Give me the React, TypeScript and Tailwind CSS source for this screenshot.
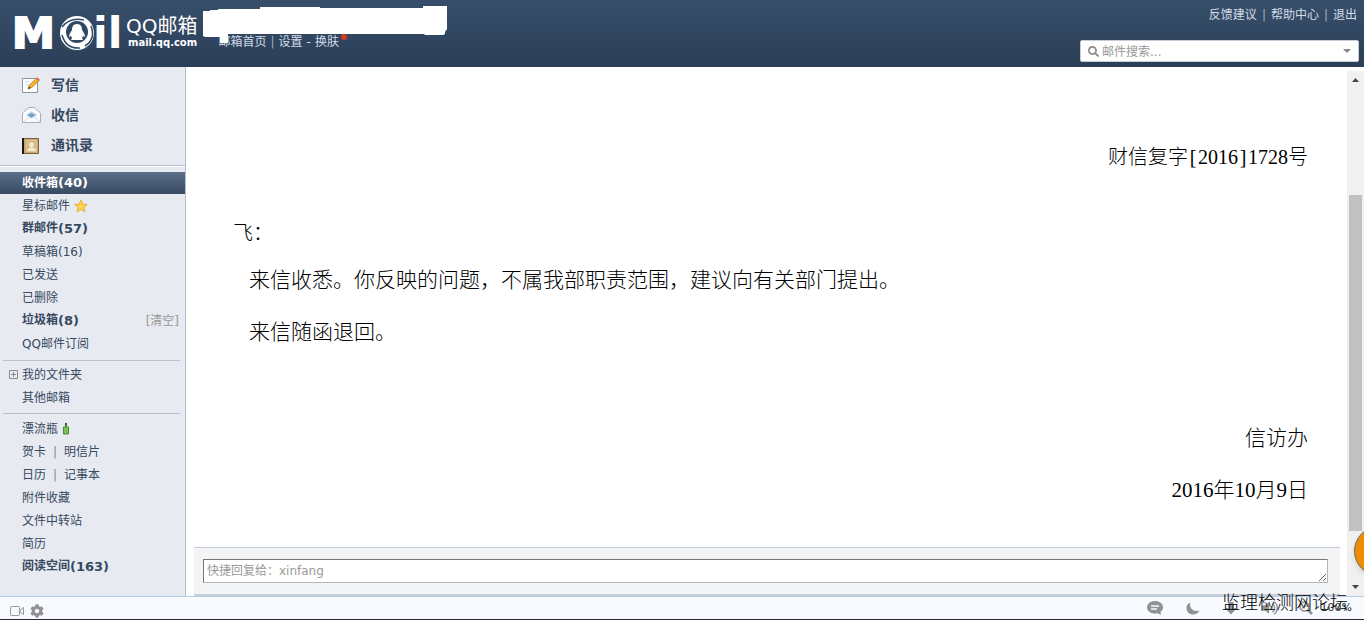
import type { ReactNode } from "react";
import { FaSearch, FaVolumeUp, FaCog } from "react-icons/fa";

const Logo = () => {
  return (
    <a href="#" aria-label="QQ Mail" className="flex text-white">
      <svg width="124" height="67" viewBox="0 0 124 67" className="shrink-0 overflow-visible font-['DejaVu_Sans',sans-serif] text-[43px] font-bold">
        <text x="12" y="48" fill="#fff" stroke="#fff" strokeWidth="2">M</text>
        <text x="93" y="48" fill="#fff">il</text>
        <circle cx="77" cy="33" r="19" fill="#324962" />
        <circle cx="77" cy="33" r="17" fill="#fff" />
        <circle cx="77" cy="32" r="11" fill="#314861" />
        <path d="M62 27q8-10 22-7M91 26q5 13-6 20M80 48q-14 1-18-13" fill="none" stroke="#314861" strokeWidth="1.500" />
        <path d="M77 24c-4 0-5 3-5 6-2 3-3 5-3 7l2-1 1 2-1 2h12l-1-2 1-2 2 1c0-2-1-4-3-7 0-3-1-6-5-6z" fill="#fff" />
      </svg>
      <span className="flex flex-col pt-[15px] pl-[2px]">
        <span className="text-[20px] leading-[22px]">QQ邮箱</span>
        <span className="pl-[2px] text-[10px] font-bold leading-[12px]">mail.qq.com</span>
      </span>
    </a>
  );
};

const Header = () => {
  return (
    <header className="relative flex h-[67px] shrink-0 justify-between bg-linear-to-b from-[#374f6b] to-[#2c3e57] text-xs text-[#d3dce8]">
      <div className="flex">
        <Logo />
        <nav className="flex gap-1 pt-[34px] pl-[21px] leading-4 whitespace-nowrap">
          <a href="#">邮箱首页</a>
          <span className="text-[#9fadbf]">|</span>
          <a href="#">设置</a>
          <span>-</span>
          <a href="#" className="relative">
            换肤
            <span className="absolute top-0 -right-2 size-[6px] rounded-full bg-[#d9391e]" />
          </a>
        </nav>
      </div>
      {/* account name is painted over */}
      <svg className="absolute top-0 left-[200px]" width="250" height="46" viewBox="0 0 250 46">
        <path d="M3 11h7v-1h8V9h42V7h60v1h103V6h24v23l-2 3v2l-2 1h-18l-1-1H28v9h-8v-6H5l-2-1z" fill="#fff" />
      </svg>
      <div className="flex flex-col items-end pr-[5px]">
        <nav className="flex gap-[5px] pt-[7px] pr-[2px] leading-4 whitespace-nowrap">
          <a href="#">反馈建议</a>
          <span className="text-[#9fadbf]">|</span>
          <a href="#">帮助中心</a>
          <span className="text-[#9fadbf]">|</span>
          <a href="#">退出</a>
        </nav>
        <label className="mt-[17px] flex h-[22px] w-[279px] items-center rounded-xs border border-[#c5cdd8] bg-white px-[7px] text-[#8a8a8a]">
          <FaSearch className="size-[11px] shrink-0" />
          <input
            type="text"
            aria-label="邮件搜索"
            placeholder="邮件搜索..."
            className="ml-[3px] min-w-0 flex-1 pt-[2px] text-xs outline-none placeholder:text-[#999]"
          />
          <svg width="8" height="4" viewBox="0 0 8 4">
            <path d="M0 0h8L4 4z" fill="#888" />
          </svg>
        </label>
      </div>
    </header>
  );
};

const WriteIcon = () => (
  <svg width="19" height="18" viewBox="0 0 19 18">
    <path d="M.5 2.500h15v14H.5z" fill="#fff" stroke="#8d939b" />
    <path d="M3 6h5M3 9h4" stroke="#d5d9de" />
    <path d="M6 13l1.500-4L14.500 2l2.500 2.500-7 7z" fill="#f2b42c" stroke="#a87518" strokeWidth=".7" />
    <path d="M14 2.500l1.200-1.200 2.600 2.500-1.300 1.200z" fill="#d8694f" />
    <path d="M6 13l1-2.400 1.500 1.400z" fill="#333" />
  </svg>
);

const InboxIcon = () => (
  <svg width="19" height="18" viewBox="0 0 19 18">
    <path d="M.5 7L7 1.500h5L18.500 7v9.500H.5z" fill="#f9fbfd" stroke="#a5aeb9" />
    <path d="M4 9l5.500-3.500L15 9l-5.500 3.500z" fill="#b5cbe2" />
    <path d="M6 9q3.500-3 7 0l-3.500 2.500z" fill="#6f9ac2" />
    <path d="M1 16l6-5M18 16l-6-5" stroke="#d3dae2" />
  </svg>
);

const ContactsIcon = () => (
  <svg width="18" height="17" viewBox="0 0 18 17">
    <path d="M.5 1.500h16v15H.5z" fill="#c8a770" stroke="#7b6138" />
    <path d="M0 1h2v16H0z" fill="#1d1710" />
    <path d="M4.500 3.500h10v11h-10z" fill="#d3b785" stroke="#dcc79d" />
    <circle cx="9.500" cy="7.500" r="2.500" fill="#f6e8cb" />
    <path d="M5 14q0-3 4.500-4 4.500 1 4.500 4z" fill="#f6e8cb" />
  </svg>
);

const Star = () => (
  <svg width="14" height="14" viewBox="0 0 14 14">
    <path d="M7 1l1.800 4.100 4.400.4-3.300 2.900 1 4.400L7 10.500l-3.900 2.300 1-4.400L.8 5.500l4.400-.4z" fill="#ffd34d" stroke="#e0a526" strokeWidth=".8" />
  </svg>
);

const Bottle = () => (
  <svg width="8" height="13" viewBox="0 0 8 13">
    <path d="M3.500 2h1v3h2v7h-5V5h2z" fill="#7cc05d" stroke="#458b33" />
    <path d="M3 1h2v2H3z" fill="#5b4b2a" />
  </svg>
);

interface FolderProps {
  name: string;
  count?: number;
  bold?: boolean;
  children?: ReactNode;
}

const Folder = ({ name, count, bold, children }: FolderProps) => {
  return (
    <li className={`flex h-[23px] items-center pl-[22px] ${bold ? "font-bold" : ""}`}>
      <a href="#" className="flex items-center">
        {name}
        {count !== undefined && <span className={bold ? "text-[13px]" : "text-xs"}>({count})</span>}
      </a>
      {children}
    </li>
  );
};

const Sidebar = () => {
  const actions = [
    { label: "写信", icon: <WriteIcon /> },
    { label: "收信", icon: <InboxIcon /> },
    { label: "通讯录", icon: <ContactsIcon /> },
  ];
  return (
    <aside className="w-[186px] shrink-0 border-r border-[#b3bfcf] bg-[#e7eaf0] text-xs whitespace-nowrap text-[#36495f]">
      <ul className="border-b border-[#b5c0d0] pt-[3px] pb-[5px]">
        {actions.map((item) => (
          <li key={item.label} className="h-[30px]">
            <a href="#" className="flex h-full items-center pl-[22px] text-sm font-bold">
              <span className="w-[29px]">{item.icon}</span>
              {item.label}
            </a>
          </li>
        ))}
      </ul>
      <ul className="border-t border-white pt-[5px]">
        <li className="flex h-[22px] items-center bg-linear-to-b from-[#5b6f88] to-[#384b63] pl-[22px] font-bold text-white">
          <a href="#" className="flex items-center">
            收件箱<span className="text-[13px]">(40)</span>
          </a>
        </li>
        <Folder name="星标邮件">
          <span className="pl-1"><Star /></span>
        </Folder>
        <Folder name="群邮件" count={57} bold />
        <Folder name="草稿箱" count={16} />
        <Folder name="已发送" />
        <Folder name="已删除" />
        <Folder name="垃圾箱" count={8} bold>
          <a href="#" className="ml-auto pr-[6px] font-normal text-[#999]">[清空]</a>
        </Folder>
        <Folder name="QQ邮件订阅" />
      </ul>
      <ul className="mt-[5px] mr-[5px] ml-[3px] border-t border-[#b5c0d0] pt-[2px]">
        <li className="flex h-[23px] items-center pl-[6px]">
          <button type="button" aria-label="展开" className="mr-[4px]">
            <svg width="9" height="9" viewBox="0 0 9 9" fill="none" stroke="#8c8c8c" className="block">
              <path d="M.5.5h8v8h-8zM2 4.500h5M4.500 2v5" />
            </svg>
          </button>
          <a href="#">我的文件夹</a>
        </li>
        <li className="flex h-[23px] items-center pl-[19px]">
          <a href="#">其他邮箱</a>
        </li>
      </ul>
      <hr className="mt-[4px] mr-[5px] mb-[3px] ml-[3px] border-[#b5c0d0]" />
      <ul>
        <Folder name="漂流瓶">
          <span className="pl-1"><Bottle /></span>
        </Folder>
        <Folder name="贺卡">
          <span className="px-[7px] text-[#7d8a9a]">|</span>
          <a href="#">明信片</a>
        </Folder>
        <Folder name="日历">
          <span className="px-[7px] text-[#7d8a9a]">|</span>
          <a href="#">记事本</a>
        </Folder>
        <Folder name="附件收藏" />
        <Folder name="文件中转站" />
        <Folder name="简历" />
        <Folder name="阅读空间" count={163} bold />
      </ul>
    </aside>
  );
};

const Letter = () => {
  return (
    <article className="flex-1 pt-[75px] pr-[39px] pl-[47px] font-['Liberation_Serif','Noto_Sans_CJK_SC',serif] text-[21px] leading-[52px] font-light text-black">
      <p className="text-right text-[20px] leading-[30px]">
        财信复字<span className="inline-block w-[10px] text-center">[</span>2016
        <span className="inline-block w-[10px] text-center">]</span>1728号
      </p>
      <p className="mt-[46px] text-[20px] leading-[30px]">飞：</p>
      <p className="mt-[6px] pl-4">来信收悉。你反映的问题，不属我部职责范围，建议向有关部门提出。</p>
      <p className="pl-4">来信随函退回。</p>
      <p className="mt-[54px] text-right">信访办</p>
      <p className="text-right">2016年10月9日</p>
    </article>
  );
};

const Scrollbar = () => {
  return (
    <div className="mt-1 flex w-[17px] shrink-0 flex-col items-center bg-[#f0f0f0] py-[7px]">
      <svg width="7" height="4" viewBox="0 0 7 4"><path d="M0 4h7L3.500 0z" fill="#444" /></svg>
      <div className="flex w-[13px] flex-1 flex-col">
        <div className="grow-[113]" />
        <div className="grow-[335] bg-[#c1c1c1]" />
        <div className="grow-[54]" />
      </div>
      <svg width="7" height="4" viewBox="0 0 7 4"><path d="M0 0h7L3.500 4z" fill="#444" /></svg>
    </div>
  );
};

const ChatIcon = () => (
  <svg width="16" height="14" viewBox="0 0 16 14" className="block">
    <path d="M8 0c4.500 0 8 2.700 8 6.200 0 2-1 3.600-2.600 4.800L14 14l-3.500-1.800Q9.300 12.500 8 12.500C3.500 12.500 0 9.700 0 6.200S3.500 0 8 0z" fill="#929292" />
    <path d="M4 5h8M4 8h6" stroke="#f7faff" strokeWidth="1.300" />
  </svg>
);

const MoonIcon = () => (
  <svg width="14" height="13" viewBox="0 0 14 13" className="block">
    <path d="M4.500.5C1.500 1.500 0 4 .5 7c.6 3.400 3.500 5.700 7 5.500 2.900-.2 5.200-1.800 6-4-3 1-6 .3-8-1.800C4 4.800 3.600 2.500 4.500.5z" fill="#929292" />
  </svg>
);

const DownloadIcon = () => (
  <svg width="12" height="13" viewBox="0 0 12 13" className="block">
    <path d="M3.500 0h5v6H12l-6 6.500L0 6h3.500z" fill="#929292" />
  </svg>
);

const ZoomIcon = () => (
  <svg width="14" height="14" viewBox="0 0 14 14" fill="none" stroke="#929292" className="block">
    <circle cx="5.500" cy="5.500" r="4.500" strokeWidth="1.500" />
    <path d="M9 9l4 4" strokeWidth="2.500" />
    <path d="M3.500 5.500h4M5.500 3.500v4" />
  </svg>
);

const StatusBar = () => {
  return (
    <footer className="relative flex h-[24px] shrink-0 items-center border-t border-b border-t-[#b4cce4] border-b-[#26282c] bg-[#f7faff] pr-[12px] pl-[10px] text-[#929292]">
      <div className="flex items-center gap-[6px] pt-[5px]">
        <button type="button" aria-label="录像">
          <svg width="14" height="10" viewBox="0 0 14 10" fill="none" stroke="#999" className="block">
            <rect x=".5" y=".5" width="9" height="9" rx="1" />
            <path d="M10 4l3.500-2.500v7L10 6z" />
          </svg>
        </button>
        <button type="button" aria-label="设置"><FaCog className="size-[14px]" /></button>
      </div>
      <div className="ml-auto flex items-center">
        <button type="button" aria-label="消息" className="mr-[23px]"><ChatIcon /></button>
        <button type="button" aria-label="夜间" className="mr-[25px]"><MoonIcon /></button>
        <button type="button" aria-label="下载" className="mr-[25px]"><DownloadIcon /></button>
        <button type="button" aria-label="声音" className="mr-[21px]"><FaVolumeUp className="size-4" /></button>
        <button type="button" aria-label="缩放" className="mr-[8px]"><ZoomIcon /></button>
        <span className="text-[11px] leading-4 text-[#333]">100%</span>
      </div>
      <span className="absolute -top-2 right-[16px] font-['Noto_Sans_CJK_SC',sans-serif] text-[18px] leading-6 font-light text-black">
        监理检测网论坛
      </span>
    </footer>
  );
};

const App = () => {
  return (
    <div className="relative flex min-h-screen flex-col overflow-hidden bg-white font-['DejaVu_Sans','Noto_Sans_CJK_SC',sans-serif]">
      <Header />
      <div className="flex flex-1">
        <Sidebar />
        <main className="flex min-w-0 flex-1 flex-col">
          <Letter />
          <div className="mr-[7px] ml-2 border-t border-b-2 border-t-[#c3ccd6] border-b-[#c8cdd7] bg-[#f3f4f6] pt-[11px] pr-[12px] pb-[11px] pl-[9px]">
            <textarea
              rows={1}
              aria-label="快捷回复"
              placeholder="快捷回复给：xinfang"
              className="block h-[24px] w-full overflow-hidden border border-[#b5b5b5] border-t-[#767676] border-l-[#767676] bg-white px-[3px] text-xs leading-[22px] placeholder:text-[#999]"
            />
          </div>
        </main>
        <Scrollbar />
      </div>
      <StatusBar />
      <button
        type="button"
        aria-label="助手"
        className="absolute -right-[40px] bottom-[44px] size-[50px] rounded-full border border-[#6b6b6b] bg-[#f08c00] shadow-md"
      />
    </div>
  );
};

export default App;
